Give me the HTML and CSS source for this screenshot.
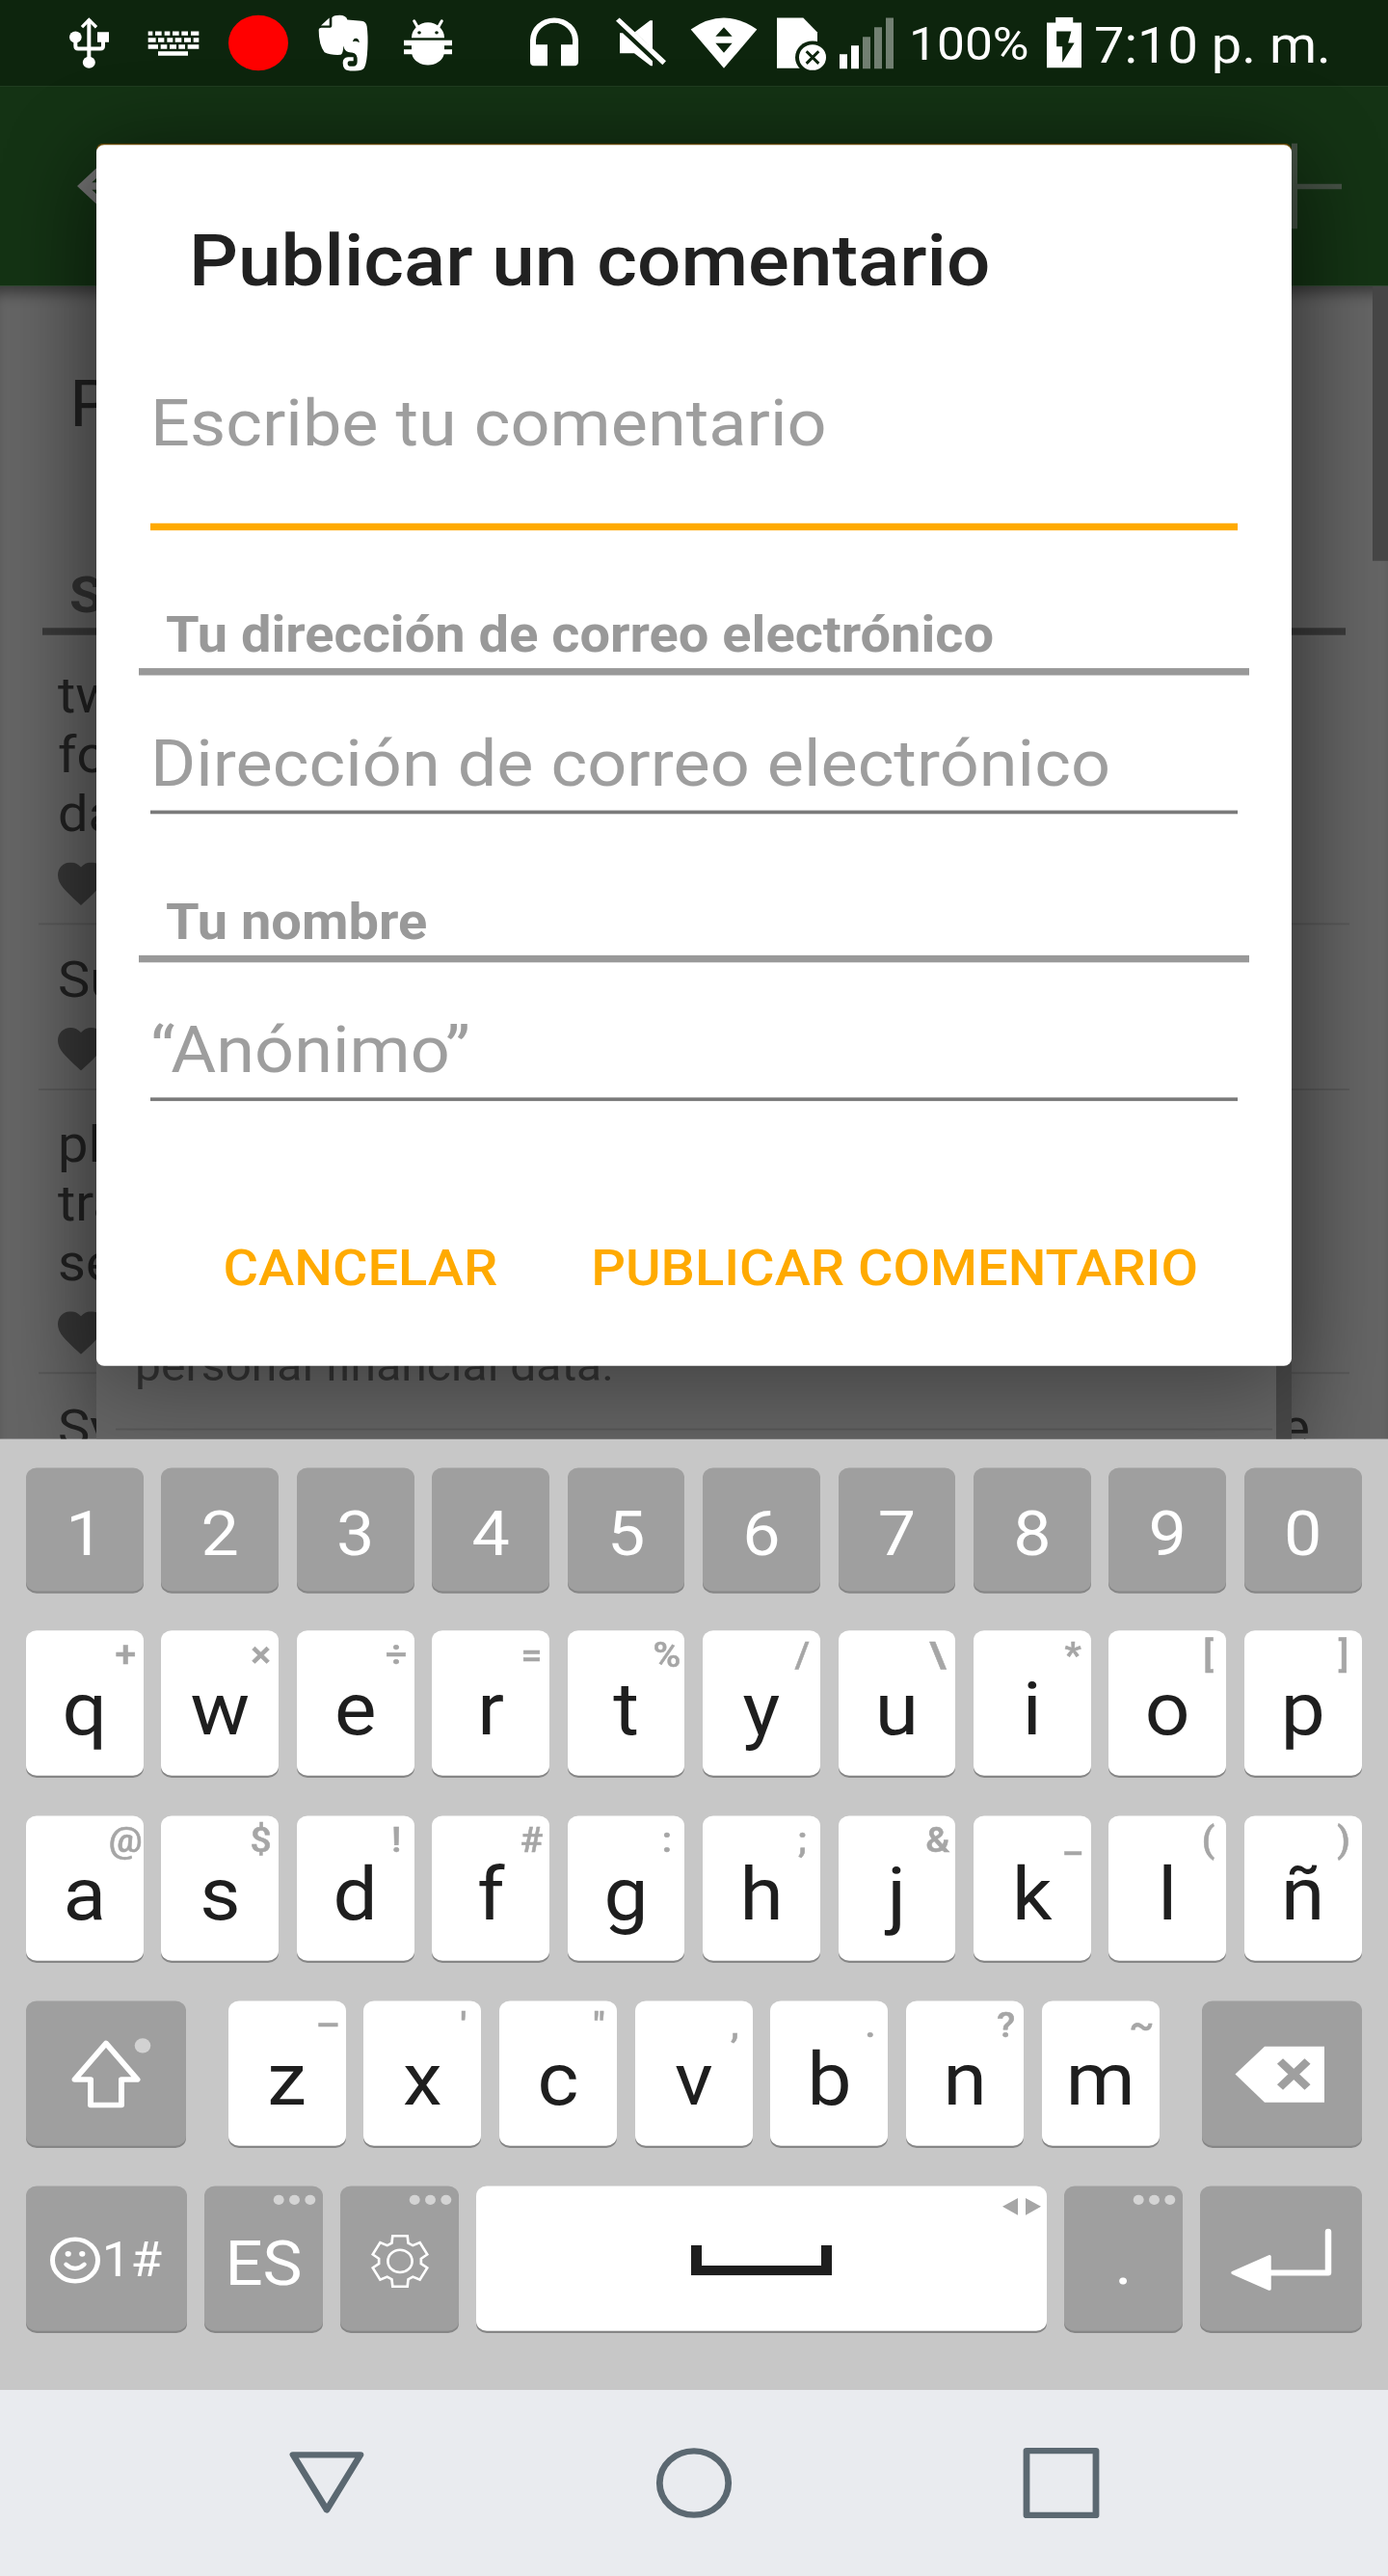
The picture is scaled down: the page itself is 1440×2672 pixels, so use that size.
FILE: index.html
```html
<!DOCTYPE html>
<html lang="es">
<head>
<meta charset="utf-8">
<title>Publicar un comentario</title>
<link rel="stylesheet" href="styles.css">
</head>
<body>
<div class="viewport">
<div class="screen">

  <header class="status">
    <svg class="ic usb" viewBox="30 0 135 210" preserveAspectRatio="none"><path d="M97 30V164M55 85V113Q55 121 63 121H133Q141 121 141 113V85" fill="none" stroke="#fff" stroke-width="12"/><path d="M75 54L97 31L120 54" fill="none" stroke="#fff" stroke-width="10"/><ellipse cx="55" cy="85" rx="19" ry="18"/><path d="M123 69H159V101H123Z"/><ellipse cx="97" cy="164" rx="19.500" ry="18"/></svg>
    <svg class="ic keyb" viewBox="276 0 168 210" preserveAspectRatio="none"><path d="M281 67h14v13h-14zM303 67h20v13h-20zM332 67h17v13h-17zM357 67h20v13h-20zM385 67h20v13h-20zM414 67h25v13h-25zM281 87h24v14h-24zM312 87h19v14h-19zM340 87h18v14h-18zM365 87h20v14h-20zM393 87h21v14h-21zM422 87h17v14h-17zM281 108h31v14h-31zM320 108h20v14h-20zM348 108h21v14h-21zM376 108h20v14h-20zM404 108h35v14h-35zM312 129h93v14h-93z"/></svg>
    <span class="rec"></span>
    <svg class="ic ever" viewBox="807 0 162 210" preserveAspectRatio="none"><path d="M819 49L845 25V49Z"/><path d="M853 24Q860 17 877 17Q897 17 901 31L945 35Q960 37 962 52Q966 80 964 120Q962 165 954 180Q948 190 925 190Q900 191 893 184Q887 178 887 165Q887 148 903 147H920V159H908Q901 160 902 168Q903 176 912 176H920Q932 175 932 160Q934 135 915 133Q893 134 889 112Q888 138 880 140Q850 142 830 132Q812 110 812 62Q813 56 820 56H845Q853 56 853 48Z"/><path class="dark" d="M918 99Q920 88 929 89Q938 91 938 102Q928 96 918 99Z"/></svg>
    <svg class="ic bug" viewBox="1074 0 156 210" preserveAspectRatio="none"><path d="M1101 87A51 48 0 0 1 1203 87Z"/><path d="M1109 35L1120 54M1195 35L1184 54" stroke="#fff" stroke-width="9" stroke-linecap="round"/><path d="M1077 95H1227V111H1203V123H1227V138H1202A51 42 0 0 1 1102 138H1077V123H1101V111H1077Z"/><ellipse class="dark" cx="1125" cy="71" rx="5.500" ry="5"/><ellipse class="dark" cx="1179" cy="71" rx="5.500" ry="5"/></svg>
    <svg class="ic phones" viewBox="27 0 156 210" preserveAspectRatio="none"><path d="M30 160V95A75 70 0 0 1 180 95V160Q180 174 168 174H126V108H162V95A57 54 0 0 0 48 95V108H84V174H42Q30 174 30 160Z"/></svg>
    <svg class="ic mute" viewBox="294 0 162 210" preserveAspectRatio="none"><path d="M297 35L308 25L453 159L442 171ZM356 69L403 33H411V120ZM309 72H318L411 159V174H405L354 135H309Z"/></svg>
    <svg class="ic wifi" viewBox="528 0 210 210" preserveAspectRatio="none"><path d="M530 61Q633 -11 736 61L633 182Z"/><path class="dark" d="M633 54L607 83H659ZM607 104H659L633 134Z"/></svg>
    <svg class="ic sim" viewBox="795 0 159 210" preserveAspectRatio="none"><path d="M798 25H880L924 70V182H798Z"/><ellipse class="dark" cx="909" cy="148" rx="54" ry="51"/><ellipse cx="909" cy="148" rx="42" ry="40"/><path d="M890 129L928 167M928 129L890 167" stroke="#0d250d" stroke-width="9"/></svg>
    <svg class="ic signal" viewBox="990 0 174 210" preserveAspectRatio="none"><path d="M993 138h24v45h-24zM1029 111h24v72h-24z"/><path opacity=".42" d="M1065 84h24v99h-24zM1101 54h24v129h-24zM1137 25h24v158h-24z"/></svg>
    <span class="pct">100%</span>
    <svg class="batt" viewBox="797 54 78 159" preserveAspectRatio="none"><path d="M817 54H856V72H875V213H797V72H817Z"/><path class="dark" d="M819 99H852L845 135H859L832 196V146H819Z"/></svg>
    <span class="clock">7:10 p. m.</span>
  </header>

  <div class="toolbar">
    <svg class="tool" viewBox="0 0 24 24"><path fill="#767676" d="M20 11H7.830l5.590-5.590L12 4l-8 8 8 8 1.410-1.410L7.830 13H20v-2z"/></svg>
    <svg class="tool" viewBox="0 0 96 96"><path d="M47 0V96" stroke="#465346" stroke-width="6"/><path d="M0 48.500H96" stroke="#465246" stroke-width="6"/></svg>
  </div>

  <main class="content">
    <h2 class="page-title">P</h2>
    <h3 class="section">S</h3>
    <ul class="list">
      <li class="item"><p>tw</p><p>fo</p><p>da</p><svg class="heart" viewBox="2 3 20 18.350" preserveAspectRatio="none"><path d="M12 21.350l-1.450-1.320C5.400 15.360 2 12.280 2 8.500 2 5.420 4.420 3 7.500 3c1.740 0 3.410.810 4.500 2.090C13.090 3.810 14.760 3 16.500 3 19.580 3 22 5.420 22 8.500c0 3.780-3.400 6.860-8.550 11.540L12 21.350z"/></svg></li>
      <li class="item"><p>Su</p><svg class="heart" viewBox="2 3 20 18.350" preserveAspectRatio="none"><path d="M12 21.350l-1.450-1.320C5.400 15.360 2 12.280 2 8.500 2 5.420 4.420 3 7.500 3c1.740 0 3.410.810 4.500 2.090C13.090 3.810 14.760 3 16.500 3 19.580 3 22 5.420 22 8.500c0 3.780-3.400 6.860-8.550 11.540L12 21.350z"/></svg></li>
      <li class="item"><p>pl</p><p>tra</p><p>se</p><svg class="heart" viewBox="2 3 20 18.350" preserveAspectRatio="none"><path d="M12 21.350l-1.450-1.320C5.400 15.360 2 12.280 2 8.500 2 5.420 4.420 3 7.500 3c1.740 0 3.410.810 4.500 2.090C13.090 3.810 14.760 3 16.500 3 19.580 3 22 5.420 22 8.500c0 3.780-3.400 6.860-8.550 11.540L12 21.350z"/></svg></li>
      <li class="item wide"><p>Sy</p><p>e</p></li>
    </ul>
    <span class="thumb"></span>
  </main>

  <section class="back-dialog">
    <p class="back-text">personal financial data.</p>
    <span class="back-thumb"></span>
  </section>

  <form class="dialog">
    <h1 class="title">Publicar un comentario</h1>
    <div class="field active">Escribe tu comentario</div>
    <div class="label">Tu dirección de correo electrónico</div>
    <div class="field">Dirección de correo electrónico</div>
    <div class="label second">Tu nombre</div>
    <div class="field">“Anónimo”</div>
    <div class="actions"><span>CANCELAR</span><span>PUBLICAR COMENTARIO</span></div>
  </form>

  <section class="keyboard">
    <div class="row digits">
      <span class="key g">1</span><span class="key g">2</span><span class="key g">3</span><span class="key g">4</span><span class="key g">5</span><span class="key g">6</span><span class="key g">7</span><span class="key g">8</span><span class="key g">9</span><span class="key g">0</span>
    </div>
    <div class="row">
      <span class="key">q<sup>+</sup></span><span class="key">w<sup>×</sup></span><span class="key">e<sup>÷</sup></span><span class="key">r<sup>=</sup></span><span class="key">t<sup>%</sup></span><span class="key">y<sup>/</sup></span><span class="key">u<sup class="heavy">\</sup></span><span class="key">i<sup>*</sup></span><span class="key">o<sup>[</sup></span><span class="key">p<sup>]</sup></span>
    </div>
    <div class="row">
      <span class="key">a<sup>@</sup></span><span class="key">s<sup>$</sup></span><span class="key">d<sup>!</sup></span><span class="key">f<sup>#</sup></span><span class="key">g<sup>:</sup></span><span class="key">h<sup>;</sup></span><span class="key">j<sup>&amp;</sup></span><span class="key">k<sup>_</sup></span><span class="key">l<sup>(</sup></span><span class="key">ñ<sup>)</sup></span>
    </div>
    <div class="row">
      <span class="key g shift"><svg width="100" height="100" viewBox="60 2269 100 100"><path d="M110 2284.500L142.500 2325H126V2353.500H94V2325H77.500Z" fill="none" stroke="#fff" stroke-width="6" stroke-linejoin="round"/><circle cx="148" cy="2287" r="8.300" fill="#d2d2d2"/></svg></span>
      <span class="key">z<sup>–</sup></span><span class="key">x<sup>'</sup></span><span class="key">c<sup>"</sup></span><span class="key">v<sup>,</sup></span><span class="key">b<sup>.</sup></span><span class="key">n<sup>?</sup></span><span class="key">m<sup>~</sup></span>
      <span class="key g back"><svg width="96" height="68" viewBox="1280 2285 96 68"><path d="M1281.500 2319L1312 2288H1374V2350.500H1312Z" fill="#fff"/><path d="M1328 2304.500L1356.500 2333.500M1356.500 2304.500L1328 2333.500" stroke="#9f9f9f" stroke-width="8.500"/></svg></span>
    </div>
    <div class="row bottom">
      <span class="key g sym"><svg width="54" height="54" viewBox="-27 -27 54 54"><circle r="23.500" fill="none" stroke="#fff" stroke-width="5"/><circle cx="-7.300" cy="-7.200" r="3.100" fill="#fff"/><circle cx="7.300" cy="-7.200" r="3.100" fill="#fff"/><path d="M-9.500 4.500Q0 14 9.500 4.500" fill="none" stroke="#fff" stroke-width="4.500" stroke-linecap="round"/></svg>1#</span>
      <span class="key g lang">ES<i class="dots"></i></span>
      <span class="key g gear"><svg width="64" height="64" viewBox="-30 -30 60 60"><path d="M-8 -19L-7.200 -26.500H7.200L8 -19L12.500 -16.400L19.300 -19.500L26.500 -7L20.500 -2.600V2.600L26.500 7L19.300 19.500L12.500 16.400L8 19L7.200 26.500H-7.200L-8 19L-12.500 16.400L-19.300 19.500L-26.500 7L-20.500 2.600V-2.600L-26.500 -7L-19.300 -19.500L-12.500 -16.400Z" fill="none" stroke="#fff" stroke-width="2.500"/><circle r="11.800" fill="none" stroke="#fff" stroke-width="2.500"/></svg><i class="dots"></i></span>
      <span class="key space"><svg width="146" height="34" viewBox="0 0 146 34"><path d="M5.500 0V28.500H140.500V0" fill="none" stroke="#1e1e1e" stroke-width="11"/></svg><svg class="arrows" width="40" height="20" viewBox="0 0 40 20"><path d="M0 10L16 .5V19.500ZM40 10L24 .5V19.500Z" fill="#a6a6a6"/></svg></span>
      <span class="key g dot">.<i class="dots"></i></span>
      <span class="key g enter"><svg width="106" height="72" viewBox="1276 2491 106 72"><path d="M1378 2495V2541H1316" fill="none" stroke="#fff" stroke-width="6.500" stroke-linecap="round" stroke-linejoin="round"/><path d="M1279 2541L1317 2523V2559Z" fill="#fff" stroke="#fff" stroke-width="3.500" stroke-linejoin="round"/></svg></span>
    </div>
  </section>

  <nav class="nav">
    <svg width="80" height="80" viewBox="-40 -40 80 80"><path d="M-35 -31.500H35L0 30Z"/></svg>
    <svg width="80" height="80" viewBox="-40 -40 80 80"><circle r="35.700"/></svg>
    <svg width="80" height="80" viewBox="-40 -40 80 80"><path d="M-36 -36H36V36H-36Z"/></svg>
  </nav>
</div>
</div>
</body>
</html>
```
FILE: styles.css
```css
* { box-sizing: border-box; }
html, body { margin: 0; background: #e9ebef; }
h1, h2, h3, p, ul { margin: 0; padding: 0; list-style: none; }

.viewport { position: relative; width: 1440px; height: 2672px; overflow: hidden; contain: strict; }

.screen {
  position: relative;
  width: 1440px;
  height: 2880px;
  display: flex;
  flex-direction: column;
  font-family: "Roboto", sans-serif;
  transform: scaleY(.92778);
  transform-origin: 0 0;
}

/* Status bar */
.status { height: 96px; flex: none; display: flex; align-items: flex-start; background: #0d250d; color: #fff; fill: #fff; white-space: nowrap; }
.ic { flex: none; height: 75.450px; margin-top: 10.780px; }
.dark { fill: #0d250d; }
.usb { width: 45px; margin-left: 70px; }
.keyb { width: 56px; margin-left: 37px; }
.rec { flex: none; width: 62px; height: 62px; margin: 17px 0 0 29px; border-radius: 50%; background: #f00; }
.ever { width: 54px; margin-left: 30px; }
.bug { width: 52px; margin-left: 35px; }
.phones { width: 52px; margin-left: 79px; }
.mute { width: 54px; margin-left: 37px; }
.wifi { width: 70px; margin-left: 24px; }
.sim { width: 53px; margin-left: 19px; }
.signal { width: 58px; margin-left: 12px; }
.pct { width: 143px; margin-left: 15px; font-size: 51.500px; line-height: 60px; padding-top: 20px; }
.batt { flex: none; width: 36px; height: 57px; margin-top: 19.400px; }
.clock { margin-left: 13px; font-size: 56px; line-height: 64px; padding-top: 18.500px; }

/* App bar behind the dialog */
.toolbar { height: 224px; flex: none; display: flex; justify-content: space-between; align-items: flex-start; padding: 64px 48px 0 64px; background: #143314; }
.tool { width: 96px; height: 96px; }

/* Dimmed page */
.content { position: relative; flex: none; height: 1289px; overflow: hidden; background: #656565; box-shadow: inset 0 16px 14px -8px rgba(0,0,0,.42); color: #222; }
.page-title { padding: 90px 0 0 72px; font-size: 72px; line-height: 84px; font-weight: 400; }
.section { margin: 138px 44px 0; padding-left: 28px; height: 78px; font-size: 56px; line-height: 66px; font-weight: 700; color: #333; border-bottom: 8px solid #3a3a3a; }
.list { margin: 6.500px 40px 0; }
.item { padding: 28px 20px 20px; border-bottom: 2px solid #595959; font-size: 56px; line-height: 66px; }
.wide { display: flex; justify-content: space-between; padding-right: 41px; }
.heart { display: block; width: 48px; height: 48px; margin-top: 21px; fill: #373737; }
.thumb { position: absolute; top: 0; right: 0; width: 16px; height: 307px; background: #464646; }

/* First dialog, covered by the comment dialog */
.back-dialog { position: absolute; left: 100px; top: 159.500px; width: 1240px; height: 1480px; padding: 1332px 20px 0; background: #646464; border-top: 6px solid #6b4b00; border-radius: 8px; box-shadow: 0 20px 100px rgba(0,0,0,.32); }
.back-text { height: 101px; padding-left: 20px; font-size: 48px; line-height: 56px; padding-top: 2px; color: #333; border-bottom: 2px solid #585858; }
.back-thumb { position: absolute; right: 0; bottom: 0; width: 16px; height: 200px; background: #474747; }

/* Comment dialog */
.dialog { position: absolute; left: 100px; top: 162px; width: 1240px; height: 1365px; padding-top: 82px; background: #fff; border-radius: 8px; box-shadow: 0 20px 100px rgba(0,0,0,.36); white-space: nowrap; }
.title { padding-left: 96px; font-size: 80px; line-height: 96px; font-weight: 500; color: #212121; }
.field { height: 99px; margin: 56px 56px 0; font-size: 72px; line-height: 86px; letter-spacing: .04px; color: #9e9e9e; border-bottom: 4px solid #7a7a7a; }
.active { height: 162px; margin-top: 91px; border-bottom: 8px solid #fa0; }
.label { height: 78px; margin: 84px 44px 0; padding-left: 28px; font-size: 56px; line-height: 66px; font-weight: 700; color: #999; border-bottom: 8px solid #999; }
.second { margin-top: 88px; }
.actions { display: flex; justify-content: flex-end; gap: 97px; margin: 154px 97px 0 0; font-size: 56px; line-height: 66px; font-weight: 500; color: #fa0; }

/* Keyboard */
.keyboard { position: relative; flex: none; height: 1063px; padding: 32px 27.500px 0 27px; background: #c7c7c7; }
.row { display: flex; gap: 18.700px; height: 207px; }
.digits { height: 181.500px; }
.key { position: relative; flex: 1 1 0; height: 162.500px; display: flex; align-items: center; justify-content: center; padding-top: 14.500px; background: #fff; color: #1e1e1e; border-radius: 11px; box-shadow: 0 2.500px 0 #868686; font-size: 82px; line-height: 96px; }
.key svg { flex: none; }
.g { background: #9f9f9f; color: #fff; }
.digits .key { height: 138px; padding-top: 10px; font-size: 70px; }
sup { position: absolute; top: 0; right: 0; width: 37px; font-size: 39px; line-height: 56px; font-weight: 500; color: #a6a6a6; -webkit-text-stroke: .6px #a6a6a6; display: flex; justify-content: center; }
.heavy { font-weight: 700; }
.shift, .back { flex: none; width: 166px; padding-top: 3px; }
.shift { margin-right: 25px; }
.back { margin-left: 25px; padding-right: 3px; }
.bottom { gap: 18px; }
.bottom .key { flex: none; width: 123px; }
.bottom .sym { width: 167px; padding-top: 5px; padding-right: 2px; gap: 1px; font-size: 53px; }
.bottom .lang { padding-top: 13.500px; font-size: 69px; }
.bottom .gear { padding-top: 5.500px; }
.bottom .space { width: 592px; padding-top: 5px; }
.bottom .dot { padding-top: 8px; font-size: 70px; }
.bottom .enter { width: 168px; padding-top: 4px; }
.arrows { position: absolute; top: 13px; right: 6px; }
.dots { position: absolute; top: 10.500px; right: 24.500px; width: 11px; height: 11px; border-radius: 50%; background: #d4d4d4; box-shadow: 16.300px 0 #d4d4d4, -16.300px 0 #d4d4d4; }

/* System navigation */
.nav { flex: none; height: 208px; display: flex; justify-content: center; align-items: center; gap: 301px; background: #e9ebef; }
.nav svg { fill: none; stroke: #5b6871; stroke-width: 6.800; stroke-linejoin: round; }
```
